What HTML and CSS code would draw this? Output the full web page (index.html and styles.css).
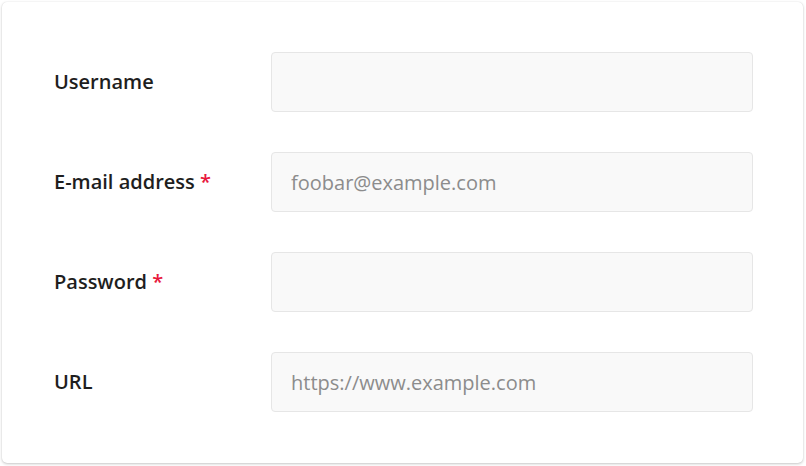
FILE: index.html
```html
<!DOCTYPE html>
<html lang="en">
<head>
<meta charset="utf-8">
<title>Form</title>
<link rel="stylesheet" href="styles.css">
</head>
<body>
<form class="card">
  <div class="row">
    <label class="label" for="u">Username</label>
    <input class="field" id="u" type="text">
  </div>
  <div class="row">
    <label class="label" for="e">E-mail address <span class="req">*</span></label>
    <input class="field" id="e" type="email" placeholder="foobar@example.com">
  </div>
  <div class="row">
    <label class="label" for="p">Password <span class="req">*</span></label>
    <input class="field" id="p" type="password">
  </div>
  <div class="row">
    <label class="label" for="w">URL</label>
    <input class="field" id="w" type="url" placeholder="https://www.example.com">
  </div>
</form>
</body>
</html>
```

FILE: styles.css
```css
html, body {
  margin: 0;
  padding: 0;
  background: #ffffff;
}
body {
  padding: 2px 3px 3px 2px;
  font-family: "Open Sans", "Liberation Sans", sans-serif;
}
.card {
  box-sizing: border-box;
  width: 801px;
  height: 461px;
  background: #fff;
  border-radius: 5px;
  box-shadow: 0 1px 3px rgba(0, 0, 0, 0.22), 0 0 1px rgba(0, 0, 0, 0.12);
  padding: 50px 50px 0 52px;
  display: flex;
  flex-direction: column;
  gap: 40px;
}
.row {
  display: grid;
  grid-template-columns: 217px 482px;
  align-items: center;
}
.label {
  font-size: 20px;
  line-height: 26px;
  font-weight: 600;
  color: #1e1e1e;
}
.req {
  color: #e8173c;
}
.field {
  box-sizing: border-box;
  height: 60px;
  width: 482px;
  margin: 0;
  border: 1px solid #e6e6e6;
  border-radius: 4px;
  background: #f9f9f9;
  padding: 0 19px;
  font-family: "Open Sans", "Liberation Sans", sans-serif;
  font-size: 20px;
  color: #333;
  outline: none;
}
.field::placeholder {
  color: #8c8c8c;
  opacity: 1;
}
```
